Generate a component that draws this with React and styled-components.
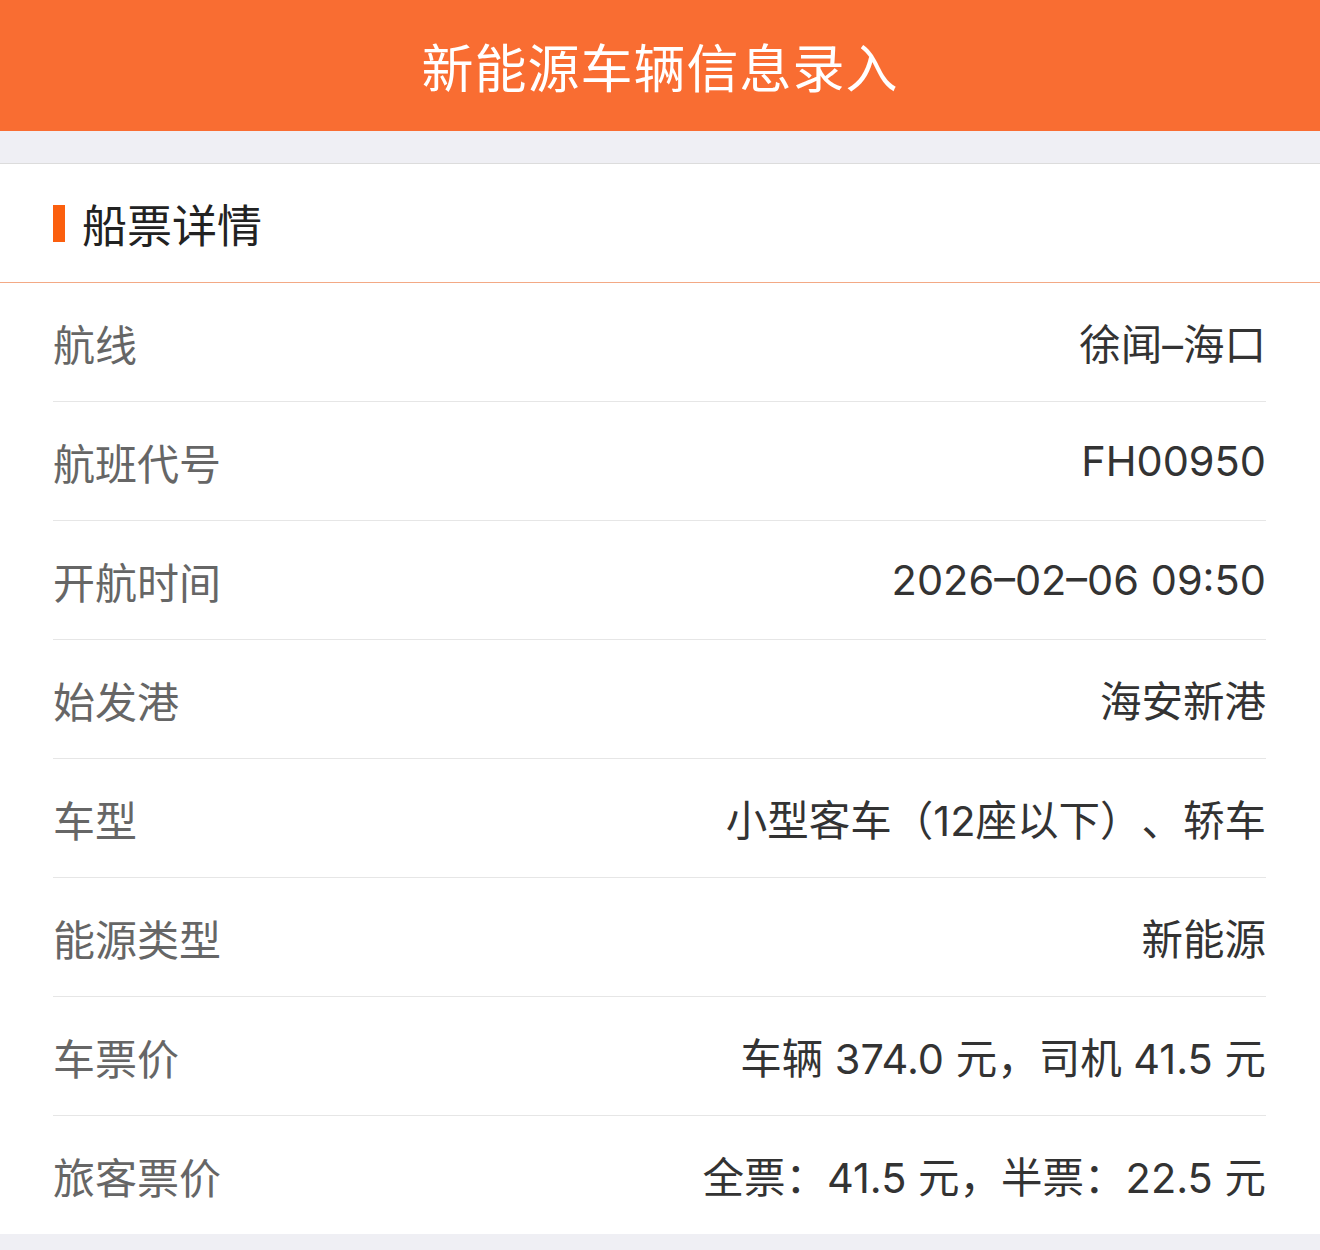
import React from "react";
import styled, { createGlobalStyle } from "styled-components";

const GlobalStyle = createGlobalStyle`
  body {
    margin: 0;
    background: #efeff4;
    font-family: "Noto Sans CJK SC", "Noto Sans", sans-serif;
    text-spacing-trim: space-all;
  }
`;

const Page = styled.div`
  width: 1320px;
  min-height: 1250px;
  background: #efeff4;
`;

const Header = styled.div`
  height: 131px;
  background: #f96d32;
  display: flex;
  align-items: center;
  justify-content: center;
  color: #fff;
  font-size: 52px;
  letter-spacing: 1px;
`;

const Gap = styled.div`
  height: 32px;
  border-bottom: 1px solid #dcdcdc;
`;

const Card = styled.div`
  background: #fff;
`;

const SectionHead = styled.div`
  height: 118px;
  display: flex;
  align-items: center;
  padding-left: 53px;
  border-bottom: 1px solid #f3a985;
`;

const Bar = styled.span`
  width: 12px;
  height: 37px;
  background: #fb5f0e;
  margin-right: 17px;
`;

const SectionTitle = styled.span`
  font-size: 45px;
  color: #222;
`;

const List = styled.div`
  padding: 0 54px 0 53px;
`;

const Row = styled.div`
  height: 118px;
  display: flex;
  align-items: center;
  justify-content: space-between;
  border-bottom: ${(p) => (p.last ? "none" : "1px solid #e6e6e6")};
`;

const Label = styled.span`
  font-size: 42px;
  color: #666;
`;

const Value = styled.span`
  font-family: "Inter", "Noto Sans CJK SC", sans-serif;
  font-size: 41.5px;
  color: #333;
  text-spacing-trim: space-all;
`;

const rows = [
  ["航线", "徐闻–海口"],
  ["航班代号", "FH00950"],
  ["开航时间", "2026–02–06 09:50"],
  ["始发港", "海安新港"],
  ["车型", "小型客车（12座以下）、轿车"],
  ["能源类型", "新能源"],
  ["车票价", "车辆 374.0 元，司机 41.5 元"],
  ["旅客票价", "全票：41.5 元，半票：22.5 元"],
];

export default function App() {
  return (
    <Page>
      <GlobalStyle />
      <Header>新能源车辆信息录入</Header>
      <Gap />
      <Card>
        <SectionHead>
          <Bar />
          <SectionTitle>船票详情</SectionTitle>
        </SectionHead>
        <List>
          {rows.map(([k, v], i) => (
            <Row key={k} last={i === rows.length - 1}>
              <Label>{k}</Label>
              <Value>{v}</Value>
            </Row>
          ))}
        </List>
      </Card>
    </Page>
  );
}
